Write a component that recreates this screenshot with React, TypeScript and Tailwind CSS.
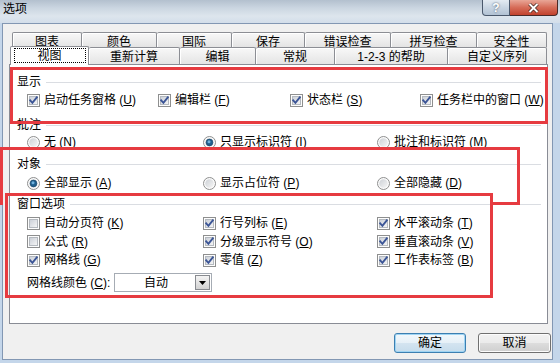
import type { ReactNode } from "react";

const row1 = [
  { label: "图表", w: "w-[70px]" },
  { label: "颜色", w: "w-[75px]" },
  { label: "国际", w: "w-[75px]" },
  { label: "保存", w: "w-[73px]" },
  { label: "错误检查", w: "w-[86px]" },
  { label: "拼写检查", w: "w-[86px]" },
  { label: "安全性", w: "w-[70px]" },
];

const row2 = [
  { label: "重新计算", w: "w-[91px]" },
  { label: "编辑", w: "w-[76px]" },
  { label: "常规", w: "w-[79px]" },
  { label: "1-2-3 的帮助", w: "w-[113px]" },
  { label: "自定义序列", w: "w-[99px]" },
];

function CheckBox({ checked }: { checked: boolean }) {
  return (
    <svg width="13" height="13" viewBox="0 0 13 13" className="shrink-0">
      <defs>
        <linearGradient id="cbfill" x1="0" y1="0" x2="1" y2="1">
          <stop offset="0" stopColor="#c9ced6" />
          <stop offset="1" stopColor="#f7f7f7" />
        </linearGradient>
      </defs>
      <rect x="0.5" y="0.5" width="12" height="12" fill="#fdfdfd" stroke="#8e8f8f" />
      <rect x="2.5" y="2.5" width="8" height="8" fill="url(#cbfill)" stroke="#b4b9bf" />
      {checked && (
        <path
          d="M3.2 6.4 L5.4 8.8 L9.8 3.4"
          fill="none"
          stroke="#3b5596"
          strokeWidth="1.9"
          strokeLinecap="square"
        />
      )}
    </svg>
  );
}

function Radio({ checked }: { checked: boolean }) {
  return (
    <svg width="13" height="13" viewBox="0 0 13 13" className="shrink-0">
      <defs>
        <linearGradient id="rbfill" x1="0" y1="0" x2="1" y2="1">
          <stop offset="0" stopColor="#cdd1d6" />
          <stop offset="1" stopColor="#f6f6f6" />
        </linearGradient>
      </defs>
      <circle cx="6.5" cy="6.5" r="6" fill="#fbfbfb" stroke="#8e8f8f" />
      <circle cx="6.5" cy="6.5" r="4.3" fill="url(#rbfill)" />
      {checked && (
        <>
          <circle cx="6.5" cy="6.5" r="3.4" fill="#1f5f8e" stroke="#143f63" strokeWidth="0.6" />
          <circle cx="6" cy="5.8" r="1.5" fill="#6fb0dc" />
        </>
      )}
    </svg>
  );
}

function Mn({ k }: { k: string }) {
  return (
    <>
      {" ("}
      <span className="underline">{k}</span>
      {")"}
    </>
  );
}

function Item({ box, children }: { box: ReactNode; children: ReactNode }) {
  return (
    <div className="flex items-center gap-[4px] whitespace-nowrap">
      {box}
      <span>{children}</span>
    </div>
  );
}

function Header({ label, className }: { label: string; className: string }) {
  return (
    <div className={`flex items-center pl-[7px] pr-[6px] ${className}`}>
      <span>{label}</span>
      <div className="ml-[5px] h-px flex-1 bg-[#dadde2]" />
    </div>
  );
}

export default function App() {
  return (
    <div className="relative h-[363px] w-[560px] overflow-hidden bg-[#c4d6ea] font-['Liberation_Sans','Noto_Sans_CJK_SC',sans-serif] text-[12px] leading-[14px] text-black">
      {/* title bar */}
      <div className="flex h-[23px] items-start justify-between bg-[linear-gradient(180deg,#b3c0ce_0%,#cbd6e1_35%,#dde5ed_70%,#d3deea_100%)]">
        <span className="pl-[3px] pt-[2px]">选项</span>
        <div className="mr-[2px] flex">
          <div className="flex h-[16px] w-[28px] items-center justify-center rounded-bl-[4px] border border-t-0 border-[#4a586c] bg-[linear-gradient(180deg,#e4ebf2_0%,#c9d5e2_50%,#b2c2d4_100%)] text-[12px] font-bold leading-[14px] text-white [text-shadow:0_0_2px_#3a4a5e]">
            ?
          </div>
          <div className="flex h-[16px] w-[48px] items-center justify-center rounded-br-[4px] border border-l-0 border-t-0 border-[#4a2a28] bg-[linear-gradient(180deg,#e9a697_0%,#d66c58_50%,#c2432e_100%)]">
            <svg width="11" height="10" viewBox="0 0 11 10">
              <path d="M1.5 1 L9.5 9 M9.5 1 L1.5 9" stroke="#3b1d18" strokeWidth="3.4" />
              <path d="M1.5 1 L9.5 9 M9.5 1 L1.5 9" stroke="#ffffff" strokeWidth="2" />
            </svg>
          </div>
        </div>
      </div>

      {/* client area */}
      <div className="ml-[2px] flex h-[337px] w-[551px] flex-col border border-[#8297b3] bg-[#f0f0f0] pt-[8px]">
        <div className="ml-[6px] w-[539px]">
          {/* back row of tabs */}
          <div className="ml-[3px] flex h-[15px]">
            {row1.map((t) => (
              <div
                key={t.label}
                className={`${t.w} rounded-t-[2px] border-r border-t border-[#8c8e94] bg-[linear-gradient(180deg,#f8f8f8,#e4e4e4)] pt-[2px] text-center shadow-[inset_1px_1px_0_#ffffff] first:border-l`}
              >
                {t.label}
              </div>
            ))}
          </div>
          {/* front row of tabs */}
          <div className="ml-[1px] flex h-[17px] items-start">
            <div className="relative z-10 -mt-px flex h-[19px] w-[79px] justify-center rounded-t-[2px] border-l border-r border-t border-[#8c8e94] bg-white">
              <div className="mt-[1px] flex h-[15px] w-[72px] items-center justify-center border border-dotted border-black">
                视图
              </div>
            </div>
            {row2.map((t) => (
              <div
                key={t.label}
                className={`${t.w} h-[17px] rounded-t-[2px] border-r border-t border-[#8c8e94] bg-[linear-gradient(180deg,#f8f8f8,#e4e4e4)] pt-[2px] text-center leading-[15px] shadow-[inset_1px_1px_0_#ffffff]`}
              >
                {t.label}
              </div>
            ))}
          </div>

          {/* panel */}
          <div className="flex h-[260px] flex-col border border-[#898c95] bg-white pt-[8px]">
            <Header label="显示" className="h-[18px]" />
            <div className="grid h-[18px] grid-cols-[131px_132px_130px_1fr] items-center pl-[17px]">
              <Item box={<CheckBox checked />}>
                启动任务窗格<Mn k="U" />
              </Item>
              <Item box={<CheckBox checked />}>
                编辑栏<Mn k="F" />
              </Item>
              <Item box={<CheckBox checked />}>
                状态栏<Mn k="S" />
              </Item>
              <Item box={<CheckBox checked />}>
                任务栏中的窗口<Mn k="W" />
              </Item>
            </div>

            <Header label="批注" className="mt-[8px] h-[16px]" />
            <div className="grid h-[18px] grid-cols-[176px_174px_1fr] items-center pl-[17px]">
              <Item box={<Radio checked={false} />}>
                无<Mn k="N" />
              </Item>
              <Item box={<Radio checked />}>
                只显示标识符<Mn k="I" />
              </Item>
              <Item box={<Radio checked={false} />}>
                批注和标识符<Mn k="M" />
              </Item>
            </div>

            <Header label="对象" className="mt-[4px] h-[18px]" />
            <div className="mt-px grid h-[18px] grid-cols-[176px_174px_1fr] items-center pl-[17px]">
              <Item box={<Radio checked />}>
                全部显示<Mn k="A" />
              </Item>
              <Item box={<Radio checked={false} />}>
                显示占位符<Mn k="P" />
              </Item>
              <Item box={<Radio checked={false} />}>
                全部隐藏<Mn k="D" />
              </Item>
            </div>

            <Header label="窗口选项" className="mt-[3px] h-[18px]" />
            <div className="mt-px grid grid-cols-[176px_174px_1fr] grid-rows-[18px_19px_18px] items-center pl-[17px]">
              <Item box={<CheckBox checked={false} />}>
                自动分页符<Mn k="K" />
              </Item>
              <Item box={<CheckBox checked />}>
                行号列标<Mn k="E" />
              </Item>
              <Item box={<CheckBox checked />}>
                水平滚动条<Mn k="T" />
              </Item>
              <Item box={<CheckBox checked={false} />}>
                公式<Mn k="R" />
              </Item>
              <Item box={<CheckBox checked />}>
                分级显示符号<Mn k="O" />
              </Item>
              <Item box={<CheckBox checked />}>
                垂直滚动条<Mn k="V" />
              </Item>
              <Item box={<CheckBox checked />}>
                网格线<Mn k="G" />
              </Item>
              <Item box={<CheckBox checked />}>
                零值<Mn k="Z" />
              </Item>
              <Item box={<CheckBox checked />}>
                工作表标签<Mn k="B" />
              </Item>
            </div>

            <div className="mt-[4px] flex h-[19px] items-center pl-[17px]">
              <span className="w-[87px] whitespace-nowrap">
                网格线颜色<Mn k="C" />:
              </span>
              <div className="flex h-[19px] w-[98px] items-center border border-[#a6acb4] bg-white">
                <span className="flex-1 pl-[2px] text-center">自动</span>
                <div className="mr-px flex h-[15px] w-[15px] items-center justify-center border border-[#888b90] bg-[linear-gradient(180deg,#f4f4f4,#d2d2d2)]">
                  <svg width="7" height="4" viewBox="0 0 7 4">
                    <path d="M0 0 H7 L3.5 4 Z" fill="#000" />
                  </svg>
                </div>
              </div>
            </div>
          </div>
        </div>

        {/* dialog buttons */}
        <div className="mt-[9px] flex justify-end gap-[12px] pr-[1px]">
          <button className="flex h-[20px] w-[72px] items-center justify-center rounded-[3px] border border-[#3c7fb1] bg-[linear-gradient(180deg,#f2f8fc_0%,#e6f0f7_50%,#d4e4f0_51%,#c6dcec_100%)] shadow-[inset_0_0_0_1px_#9fd4f3]">
            确定
          </button>
          <button className="flex h-[20px] w-[73px] items-center justify-center rounded-[3px] border border-[#707070] bg-[linear-gradient(180deg,#f2f2f2_0%,#ebebeb_50%,#dddddd_51%,#cfcfcf_100%)] shadow-[inset_0_0_0_1px_#fcfcfc]">
            取消
          </button>
        </div>
      </div>

      {/* red annotation boxes drawn over the dialog */}
      <div className="absolute left-[10px] top-[67px] h-[57px] w-[538px] border-[3px] border-[#e63b40]" />
      <div className="absolute left-0 top-[147px] h-[58px] w-[520px] border-[3px] border-b-0 border-[#e63b40]" />
      <div className="absolute left-[490px] top-[202px] h-[3px] w-[30px] bg-[#e63b40]" />
      <div className="absolute left-[5px] top-[193px] h-[105px] w-[488px] border-[3px] border-[#e63b40]" />
    </div>
  );
}
